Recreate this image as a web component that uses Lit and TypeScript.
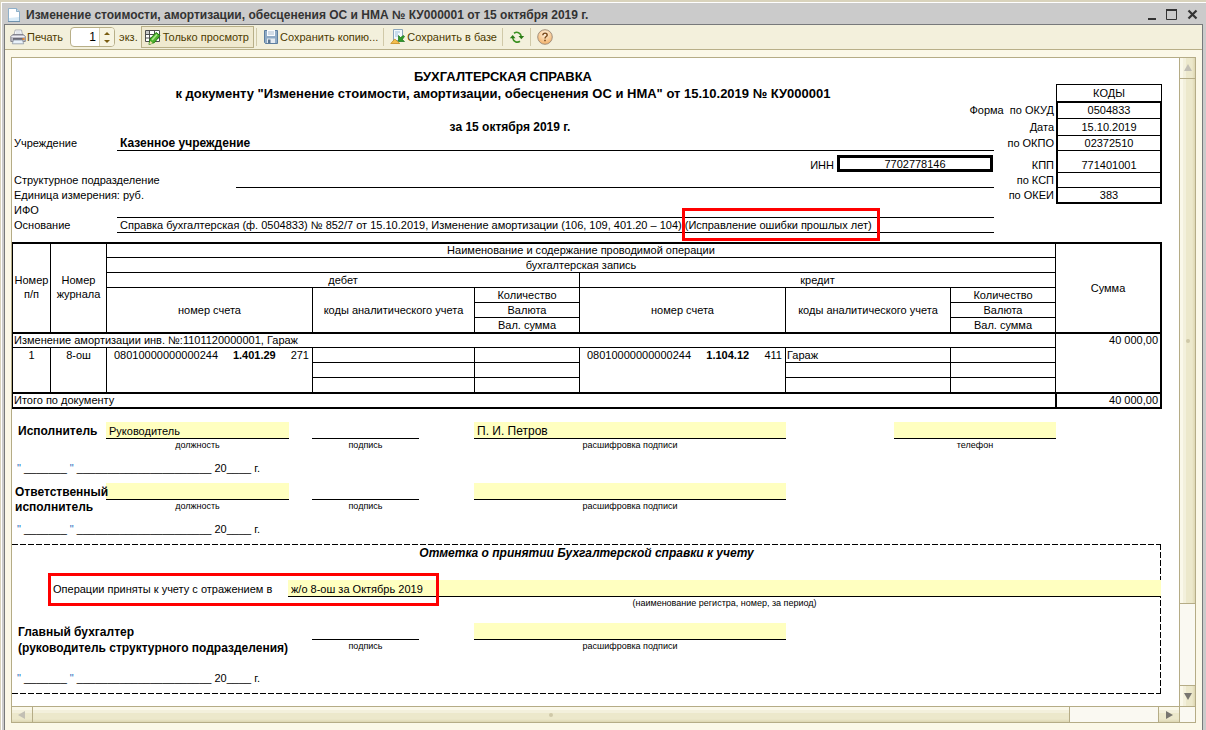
import { LitElement, html, css, svg, nothing } from "lit";
import { customElement, state } from "lit/decorators.js";

const iconDocument = svg`<svg viewBox="0 0 14 16" width="14" height="16">
  <path d="M1.500 1.500h8l3 3v10h-11z" fill="#d9ebf7" stroke="#8fb0c9"/>
  <path d="M2 2h7v3h3v5l-10 1z" fill="#fff"/>
  <path d="M9.500 1.500v3h3" fill="#c4dcec" stroke="#8fb0c9"/>
  <path d="M1 14.500h12" stroke="#6f92ad"/></svg>`;

const iconPrinter = svg`<svg viewBox="0 0 16 16" width="16" height="16">
  <path d="M4 6l1.200-5h6.300l1 5z" fill="#fff" stroke="#9aa0a8" stroke-width=".8"/>
  <path d="M6 3h4.500M5.700 5h5.500" stroke="#b9c3cf" stroke-width=".8"/>
  <path d="M.8 7.500l2-2h10.500l2 2v5H.8z" fill="#bcbcc6" stroke="#75757f" stroke-width=".8"/>
  <path d="M1.500 7.500h13" stroke="#efeff5"/>
  <path d="M3 9h10v2.500H3z" fill="#6a6a76"/>
  <path d="M3.500 11h9l1.200 3.800H2.300z" fill="#e9f2fb" stroke="#8e97a3" stroke-width=".8"/>
  <path d="M12.500 9h2v2h-2z" fill="#e88a33"/></svg>`;

const iconViewOnly = svg`<svg viewBox="0 0 17 16" width="17" height="16">
  <path d="M1.500 1.500h14v11h-14z" fill="#fff" stroke="#4c4c4c"/>
  <path d="M1 5.500h15M1 9h15M5.500 1v12M10.500 1v12" stroke="#4c4c4c"/>
  <path d="M2 2h3v3H2z" fill="#c8c8c8"/>
  <path d="M6 10l6-6.500 4 3-5.500 7-5.500 2z" fill="#4fb32c" stroke="#207d12"/>
  <path d="M8 11l5-5.500" stroke="#a9e58a" stroke-width="1.600"/>
  <path d="M5 15.500l1.200-3.500 2.800 2.200z" fill="#f2dda7"/></svg>`;

const iconDiskette = svg`<svg viewBox="0 0 16 16" width="16" height="16">
  <path d="M1.500 1.500h13v13h-12l-1-1z" fill="#8fabc6" stroke="#5d7e9f"/>
  <path d="M4 1h8v6H4z" fill="#fbfdff"/>
  <path d="M5 3h6M5 5h6" stroke="#a9bccf"/>
  <path d="M4 9.500h8V14H4z" fill="#e6ecf2"/>
  <path d="M5 10.500h2.500V14H5z" fill="#5a7590"/></svg>`;

const iconSaveBase = svg`<svg viewBox="0 0 16 16" width="16" height="16">
  <path d="M3.500 .5h9v11h-9z" fill="#f2f8fd" stroke="#8aa5bd"/>
  <path d="M5 3h5M5 5h3M5 7h3" stroke="#9fc0dc"/>
  <path d="M.8 14.500l4-4.500 5 4.500z" fill="#f4c04e" stroke="#c78b1e" stroke-width=".8"/>
  <path d="M14.500 12.500H8.500V6.500l2 2 3-2 1 1-2.200 3z" fill="#2f9b28" stroke="#17701a" stroke-width=".7"/></svg>`;

const iconRefresh = svg`<svg viewBox="0 0 16 16" width="16" height="16" fill="none">
  <path d="M5 4.200C8 2.300 11.800 3.500 12.300 7.500" stroke="#3a9021" stroke-width="1.600"/>
  <path d="M9.500 7H15.200L12.300 10.200z" fill="#2a7a16"/>
  <path d="M11 12.300C8 14.200 4.200 12.500 3.700 9" stroke="#3a9021" stroke-width="1.600"/>
  <path d="M.8 9.300h5.700L3.700 6.100z" fill="#2a7a16"/></svg>`;

const iconHelp = svg`<svg viewBox="0 0 16 16" width="16" height="16">
  <defs><radialGradient id="g" cx=".5" cy=".3" r=".7">
    <stop offset="0" stop-color="#fff3df"/><stop offset="1" stop-color="#f3b066"/></radialGradient></defs>
  <circle cx="8" cy="8" r="7.300" fill="url(#g)" stroke="#a3917e"/>
  <path d="M5.800 6.300c0-3 4.600-2.800 4.400-.2C10.100 7.600 8 7.600 8 9.600" fill="none" stroke="#7a4a1c" stroke-width="1.400"/>
  <path d="M7.200 10.800h1.600v1.500H7.200z" fill="#7a4a1c"/></svg>`;

const arrow = (d: string, fill: string) =>
  svg`<svg viewBox="0 0 8 8" width="8" height="8"><path d=${d} fill=${fill}/></svg>`;

interface SignField {
  id: string;
  slot: "post" | "sign" | "name" | "phone";
  caption: string;
  value?: string;
}

@customElement("app-root")
export class AppRoot extends LitElement {
  @state() private copies = 1;

  static styles = css`
    :host {
      display: block;
      box-sizing: border-box;
      min-height: 100vh;
      padding: 2px 0 0 1px;
      background: #d9d3bc;
      font-family: "Liberation Sans", Arial, sans-serif;
      font-size: 11px;
      line-height: 13px;
      color: #000;
    }
    *, *::before, *::after { box-sizing: border-box; }
    svg { display: block; flex: none; }
    button, input { font: inherit; color: inherit; margin: 0; padding: 0; }
    button { border: 0; background: none; display: flex; align-items: center; white-space: nowrap; }

    .window {
      display: flex;
      flex-direction: column;
      min-height: calc(100vh - 2px);
      padding: 0 3px 0 2px;
      background: #cbcbcb;
      border-top: 1px solid #fff;
      border-left: 1px solid #fff;
    }
    .titlebar { display: flex; align-items: center; height: 21px; padding: 2px 5px 0 3px; gap: 5px; }
    .title { flex: 1; margin: 0; font-size: 12px; line-height: 16px; font-weight: bold; color: #333; white-space: nowrap; }
    .controls { display: flex; gap: 10px; }
    .body {
      flex: 1;
      background: #fbf8e8;
      border: 1px solid #77797b;
      border-bottom: 0;
    }

    .toolbar {
      display: flex;
      align-items: center;
      height: 25px;
      padding: 0 5px;
      background: #f3f0dc;
      border-bottom: 1px solid #b8af88;
      color: #4d3b00;
      line-height: 16px;
    }
    .tool { height: 22px; gap: 1px; padding-right: 3px; }
    .tool.on { margin-left: 3px; padding: 0 4px 0 2px; gap: 2px; background: #efe9cf; border: 1px solid #b8af88; }
    .spin {
      display: flex;
      height: 20px;
      width: 45px;
      margin: 0 4px;
      border: 1px solid #b8af88;
      border-radius: 4px;
      background: #fff;
      overflow: hidden;
    }
    .spin input { flex: 1; min-width: 0; border: 0; outline: 0; padding-right: 3px; font-size: 12px; text-align: right; color: #000; background: none; }
    .steps { display: flex; flex-direction: column; width: 15px; background: #f7f4e2; border-left: 1px solid #d8d1b0; }
    .steps button { flex: 1; justify-content: center; }
    .sep { width: 1px; height: 18px; margin: 0 6px 0 2px; background: #d0c9a8; }

    .viewer {
      display: grid;
      grid-template-columns: minmax(0, 1fr) 16px;
      margin: 7px 6px;
      border: 1px solid #b5ac86;
      background: #fff;
    }
    .doc { padding: 10px 17px 12px 0; white-space: nowrap; }

    .bar { display: flex; background: #faf9f2; }
    .bar button { justify-content: center; flex: none; }
    .thumb { display: flex; align-items: center; justify-content: center; }
    .thumb::after { content: ""; width: 4px; height: 4px; border-radius: 2px; background: #cfc8a8; }
    .vbar { flex-direction: column; border-left: 1px solid #b5ac86; }
    .vbar button, .vbar .thumb { background: linear-gradient(90deg, #faf8ea 0 3px, #f3f0dc 3px 6px, #ece8cb 6px 12px, #ddd6b2); }
    .vbar button { height: 20px; }
    .vbar .thumb { flex: 526; border: solid #b5ac86; border-width: 1px 0; }
    .vbar .track { flex: 81; }
    .vbar button:last-child { border-top: 1px solid #b5ac86; height: 21px; }
    .hbar { border-top: 1px solid #b5ac86; height: 16px; }
    .hbar button, .hbar .thumb { background: linear-gradient(#faf8ea 0 3px, #f3f0dc 3px 6px, #ece8cb 6px 12px, #ddd6b2); }
    .hbar button { width: 20px; }
    .hbar .thumb { flex: 1038; border: solid #b5ac86; border-width: 0 1px; }
    .hbar .track { flex: 88; }
    .hbar button:last-child { border-left: 1px solid #b5ac86; width: 21px; }
    .corner { border: solid #b5ac86; border-width: 1px 0 0 1px; background: #faf9f2; }

    .head { display: flex; align-items: flex-start; }
    .main { flex: 982; min-width: 0; }
    .h { margin: 0; text-align: center; font-size: 13px; line-height: 17px; font-weight: bold; }
    .period { margin: 17px 0 0 14px; text-align: center; font-size: 12px; line-height: 17px; font-weight: bold; }
    .row { display: flex; height: 15px; line-height: 14px; padding-left: 2px; }
    .row .label { width: 103px; flex: none; }
    .row .label.wide { width: 222px; }
    .row .val { flex: 1; padding-left: 3px; border-bottom: 1px solid #000; min-width: 0; }
    .strong { font-weight: bold; font-size: 12px; }
    .inn { display: flex; justify-content: flex-end; height: 22px; padding: 4px 1px 1px 0; gap: 3px; line-height: 20px; }
    .inn .box { width: 156px; border: 3px solid #000; text-align: center; line-height: 13px; height: 17px; }
    .mark { position: relative; display: inline-block; margin-left: 3px; }
    .mark::after { content: ""; position: absolute; inset: -10px -8px -9px -3px; border: 3px solid #f00; }

    .codes { flex: 168; margin-top: 16px; border-collapse: separate; border-spacing: 0; display: grid; }
    .codes tbody { display: grid; }
    .codes tr { display: grid; grid-template-columns: minmax(0, 1fr) 106px; height: 15px; }
    .codes th { display: flex; justify-content: flex-end; align-items: flex-end; padding: 0 2px 1px 0; font-weight: normal; }
    .codes td { display: flex; justify-content: center; align-items: flex-end; padding: 0; border: solid #000; border-width: 0 2px 1px; }
    .codes tr.top { height: 17px; }
    .codes tr.top td { border-width: 1px 1px 0; }
    .codes tr.first { height: 18px; }
    .codes tr.first td { border-top-width: 2px; }
    .codes tr.mid { height: 17px; }
    .codes tr.tall { height: 22px; }
    .codes tr.last { height: 16px; }
    .codes tr.last td { border-bottom-width: 2px; }
    .codes tr.last th { padding-bottom: 2px; }
    .codes tr.first td, .codes tr.mid td, .codes tr.top td { align-items: center; }
    .codes tr.first th, .codes tr.mid th { align-items: center; padding-bottom: 0; }

    .ops {
      width: 100%;
      margin-top: 9px;
      table-layout: fixed;
      border-collapse: separate;
      border-spacing: 0;
      border: solid #000;
      border-width: 2px 1px 0 1px;
    }
    .ops th, .ops td {
      height: 15px;
      padding: 0 1px;
      border: solid #000;
      border-width: 0 1px 1px 0;
      font-weight: normal;
      text-align: center;
      vertical-align: middle;
    }
    .ops .low { height: 14px; }
    .ops .high { height: 16px; }
    .ops .thick { border-bottom-width: 2px; }
    .ops .lead { text-align: left; }
    .ops .sum { text-align: right; padding-right: 2px; vertical-align: top; }
    .ops .up { padding-top: 1px; vertical-align: top; }
    .ops .div { border-left-width: 1px; }
    .ops .wrap { white-space: normal; line-height: 14px; padding: 0 0 2px; }
    .account { display: flex; justify-content: space-between; padding: 0 2px 0 6px; }

    .sign {
      display: grid;
      grid-template-columns:
        minmax(0, 94fr) minmax(0, 183fr) minmax(0, 23fr) minmax(0, 107fr) minmax(0, 55fr)
        minmax(0, 312fr) minmax(0, 108fr) minmax(0, 162fr) minmax(0, 106fr);
      height: 29px;
    }
    .signs { margin-top: 13px; }
    .who { grid-column: 1 / 4; grid-row: 1; z-index: 1; pointer-events: none; margin: 0; padding: 1px 0 0 6px; font-size: 12px; line-height: 17px; font-weight: bold; }
    .who.pair { line-height: 15px; padding: 2px 0 0 3px; }
    .who.chief { line-height: 16px; }
    .cell { grid-row: 1; display: flex; flex-direction: column; }
    .post { grid-column: 2; }
    .signature { grid-column: 4; }
    .name { grid-column: 6; }
    .phone { grid-column: 8; }
    .fill {
      display: block;
      width: 100%;
      height: 17px;
      padding: 1px 3px 0;
      border: 0;
      border-bottom: 1px solid #000;
      border-radius: 0;
      outline: 0;
      background: #ffffc0;
    }
    .name .fill { font-size: 12px; }
    .line { height: 17px; border-bottom: 1px solid #000; }
    .cap { font-size: 9px; line-height: 12px; text-align: center; }
    .date { margin: 10px 0 7px; padding-left: 5px; line-height: 15px; }
    .q { color: #1f6fc0; }

    .accept {
      background:
        repeating-linear-gradient(90deg, #000 0 6px, transparent 6px 8px) top / 100% 1px no-repeat,
        repeating-linear-gradient(90deg, #000 0 6px, transparent 6px 8px) bottom / 100% 1px no-repeat,
        repeating-linear-gradient(#000 0 6px, transparent 6px 8px) right / 1px 100% no-repeat;
      margin-right: 1px;
      padding-bottom: 1px;
    }
    .accept h2 { margin: 0; padding-top: 1px; font-size: 12px; line-height: 16px; font-style: italic; text-align: center; }
    .accept .sign { margin-right: -1px; }
    .entry { position: relative; display: grid; grid-template-columns: 276px 1fr; margin: 19px 0 14px; }
    .entry > label { padding: 3px 0 0 41px; }
    .entry .cap { grid-column: 2; }
    .entry::after { content: ""; position: absolute; left: 36px; top: -7px; width: 391px; height: 33px; border: 3px solid #f00; pointer-events: none; }
    .accept .date { margin-top: 19px; }
  `;

  private step(delta: number) {
    this.copies = Math.max(1, this.copies + delta);
  }

  private codeRow(cls: string, label: string, value: string) {
    return html`<tr class=${cls}><th scope="row">${label}</th><td>${value}</td></tr>`;
  }

  private signCell(f: SignField) {
    const cls = f.slot === "sign" ? "signature" : f.slot;
    return html`<div class="cell ${cls}">
      ${f.slot === "sign"
        ? html`<div class="line"></div><div class="cap">${f.caption}</div>`
        : html`<input class="fill" id=${f.id} type="text" .value=${f.value ?? ""} /><label class="cap" for=${f.id}>${f.caption}</label>`}
    </div>`;
  }

  private signRow(cls: string, who: unknown, fields: SignField[]) {
    return html`<div class="sign"><p class="who ${cls}">${who}</p>${fields.map((f) => this.signCell(f))}</div>
      <p class="date"><span class="q">"</span> _______ <span class="q">"</span> ______________________ 20____ г.</p>`;
  }

  private account(kps: string, acc: string, kosgu: string) {
    return html`<div class="account"><span>${kps}</span><b>${acc}</b><span>${kosgu}</span></div>`;
  }

  render() {
    const widths = [38, 56, 206, 162, 105, 206, 165, 105, 105];
    return html`
      <div class="window">
        <header class="titlebar">
          ${iconDocument}
          <h1 class="title">Изменение стоимости, амортизации, обесценения ОС и НМА № КУ000001 от 15 октября 2019 г.</h1>
          <div class="controls">
            <button aria-label="Свернуть"><svg width="9" height="11"><path d="M1 9h8v2H1z" fill="#333"/></svg></button>
            <button aria-label="Развернуть"><svg width="11" height="11"><path d="M.5 1h10v9.500H.5z" fill="none" stroke="#333"/><path d="M0 0h11v2H0z" fill="#333"/></svg></button>
            <button aria-label="Закрыть"><svg width="11" height="11"><path d="M1.500 1.500l8 8M9.500 1.500l-8 8" stroke="#333" stroke-width="2.200"/></svg></button>
          </div>
        </header>
        <div class="body">
          <div class="toolbar">
            <button class="tool">${iconPrinter}Печать</button>
            <div class="spin">
              <input id="copies" type="text" .value=${String(this.copies)} />
              <div class="steps">
                <button aria-label="Больше" @click=${() => this.step(1)}>${arrow("M1 6h6L4 3z", "#7a5c10")}</button>
                <button aria-label="Меньше" @click=${() => this.step(-1)}>${arrow("M1 2h6L4 5z", "#7a5c10")}</button>
              </div>
            </div>
            <label for="copies">экз.</label>
            <button class="tool on" aria-pressed="true">${iconViewOnly}Только просмотр</button>
            <span class="sep"></span>
            <button class="tool">${iconDiskette}Сохранить копию...</button>
            <span class="sep"></span>
            <button class="tool">${iconSaveBase}Сохранить в базе</button>
            <span class="sep"></span>
            <button class="tool" aria-label="Обновить">${iconRefresh}</button>
            <span class="sep"></span>
            <button class="tool" aria-label="Справка">${iconHelp}</button>
          </div>
          <main class="viewer">
            <article class="doc">
              <section class="head">
                <div class="main">
                  <p class="h">БУХГАЛТЕРСКАЯ СПРАВКА</p>
                  <p class="h">к документу "Изменение стоимости, амортизации, обесценения ОС и НМА" от 15.10.2019 № КУ000001</p>
                  <p class="period">за 15 октября 2019 г.</p>
                  <div class="row"><span class="label">Учреждение</span><span class="val strong">Казенное учреждение</span></div>
                  <div class="inn"><span>ИНН</span><span class="box">7702778146</span></div>
                  <div class="row"><span class="label wide">Структурное подразделение</span><span class="val"></span></div>
                  <div class="row"><span>Единица измерения: руб.</span></div>
                  <div class="row"><span class="label">ИФО</span><span class="val"></span></div>
                  <div class="row">
                    <span class="label">Основание</span>
                    <span class="val">Справка бухгалтерская (ф. 0504833) № 852/7 от 15.10.2019, Изменение амортизации (106, 109, 401.20 – 104)<span class="mark">(Исправление ошибки прошлых лет)</span></span>
                  </div>
                </div>
                <table class="codes"><tbody>
                  <tr class="top"><th></th><td>КОДЫ</td></tr>
                  ${this.codeRow("first", "Форма\u00a0 по ОКУД", "0504833")}
                  ${this.codeRow("mid", "Дата", "15.10.2019")}
                  ${this.codeRow("", "по ОКПО", "02372510")}
                  ${this.codeRow("tall", "КПП", "771401001")}
                  ${this.codeRow("", "по КСП", "")}
                  ${this.codeRow("last", "по ОКЕИ", "383")}
                </tbody></table>
              </section>

              <table class="ops">
                <colgroup>${widths.map((w) => html`<col style="width:${(w / 1148) * 100}%" />`)}</colgroup>
                <thead>
                  <tr>
                    <th class="thick wrap" rowspan="6">Номер<br />п/п</th>
                    <th class="thick wrap" rowspan="6">Номер<br />журнала</th>
                    <th class="low" colspan="6">Наименование и содержание проводимой операции</th>
                    <th class="thick" rowspan="6">Сумма</th>
                  </tr>
                  <tr><th colspan="6">бухгалтерская запись</th></tr>
                  <tr><th colspan="3">дебет</th><th colspan="3">кредит</th></tr>
                  <tr>
                    <th class="thick" rowspan="3">номер счета</th>
                    <th class="thick" rowspan="3">коды аналитического учета</th>
                    <th>Количество</th>
                    <th class="thick" rowspan="3">номер счета</th>
                    <th class="thick" rowspan="3">коды аналитического учета</th>
                    <th>Количество</th>
                  </tr>
                  <tr><th>Валюта</th><th>Валюта</th></tr>
                  <tr><th class="thick high">Вал. сумма</th><th class="thick high">Вал. сумма</th></tr>
                </thead>
                <tbody>
                  <tr>
                    <td class="low lead" colspan="8">Изменение амортизации инв. №:1101120000001, Гараж</td>
                    <td class="sum thick" rowspan="4">40 000,00</td>
                  </tr>
                  ${[0, 1, 2].map((i) => {
                    const end = i === 2 ? "thick high" : "";
                    return html`<tr>
                      ${i === 0
                        ? html`<td class="up thick" rowspan="3">1</td>
                            <td class="up thick" rowspan="3">8-ош</td>
                            <td class="up thick" rowspan="3">${this.account("08010000000000244", "1.401.29", "271")}</td>`
                        : nothing}
                      <td class=${end}></td><td class=${end}></td>
                      ${i === 0
                        ? html`<td class="up thick" rowspan="3">${this.account("08010000000000244", "1.104.12", "411")}</td>`
                        : nothing}
                      <td class="lead ${end}">${i === 0 ? "Гараж" : ""}</td><td class=${end}></td>
                    </tr>`;
                  })}
                  <tr>
                    <td class="lead thick" colspan="8">Итого по документу</td>
                    <td class="sum thick div">40 000,00</td>
                  </tr>
                </tbody>
              </table>

              <section class="signs">
                ${this.signRow("", "Исполнитель", [
                  { id: "p1", slot: "post", caption: "должность", value: "Руководитель" },
                  { id: "s1", slot: "sign", caption: "подпись" },
                  { id: "n1", slot: "name", caption: "расшифровка подписи", value: "П. И. Петров" },
                  { id: "t1", slot: "phone", caption: "телефон" },
                ])}
                ${this.signRow("pair", html`Ответственный<br />исполнитель`, [
                  { id: "p2", slot: "post", caption: "должность" },
                  { id: "s2", slot: "sign", caption: "подпись" },
                  { id: "n2", slot: "name", caption: "расшифровка подписи" },
                ])}
              </section>

              <section class="accept">
                <h2>Отметка о принятии Бухгалтерской справки к учету</h2>
                <div class="entry">
                  <label for="reg">Операции приняты к учету с отражением в</label>
                  <input class="fill" id="reg" type="text" .value=${"ж/о 8-ош за Октябрь 2019"} />
                  <span class="cap">(наименование регистра, номер, за период)</span>
                </div>
                ${this.signRow("chief", html`Главный бухгалтер<br />(руководитель структурного подразделения)`, [
                  { id: "s3", slot: "sign", caption: "подпись" },
                  { id: "n3", slot: "name", caption: "расшифровка подписи" },
                ])}
              </section>
            </article>
            <div class="bar vbar">
              <button aria-label="Вверх">${arrow("M0 7h8L4 0z", "#c2bfb4")}</button>
              <div class="thumb"></div><div class="track"></div>
              <button aria-label="Вниз">${arrow("M0 1h8L4 8z", "#77756f")}</button>
            </div>
            <div class="bar hbar">
              <button aria-label="Влево">${arrow("M7 0v8L0 4z", "#c2bfb4")}</button>
              <div class="thumb"></div><div class="track"></div>
              <button aria-label="Вправо">${arrow("M1 0v8l7-4z", "#77756f")}</button>
            </div>
            <div class="corner"></div>
          </main>
        </div>
      </div>
    `;
  }
}
